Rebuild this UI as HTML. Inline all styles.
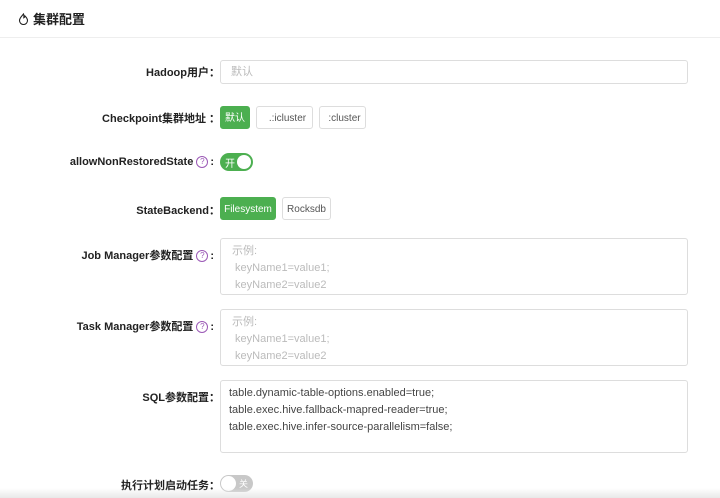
<!DOCTYPE html>
<html><head><meta charset="utf-8"><style>
body{margin:0;width:720px;height:498px;background:#fff;font-family:"Liberation Sans","Noto Sans CJK SC",sans-serif;position:relative;overflow:hidden;color:#333}
.a{position:absolute}
.hd{left:0;top:0;width:720px;height:37px;border-bottom:1px solid #eee}
.lbl{position:absolute;right:500px;font-size:11px;font-weight:bold;color:#222;white-space:nowrap}
.q{display:inline-block;width:10px;height:10px;border:1px solid #9b59b6;border-radius:50%;font-size:8px;line-height:10px;text-align:center;color:#9b59b6;font-weight:normal;vertical-align:1px;margin:0 2px 0 3px}
.box{position:absolute;left:220px;width:468px;border:1px solid #ddd;border-radius:3px;box-sizing:border-box;font-size:11px;color:#bbb;padding:4px 11px;line-height:17px}
.btn{position:absolute;height:23px;border:1px solid #ddd;border-radius:3px;box-sizing:border-box;font-size:10px;line-height:23px;text-align:center;color:#555;background:#fff}
.g{background:#4caf50;border-color:#4caf50;color:#fff}
</style></head><body>
<div class="a hd"></div>
<div class="a" style="left:18px;top:9px;font-size:13px;font-weight:bold;color:#222"><svg width="11" height="12" viewBox="0 0 11 12" style="vertical-align:-1px;margin-right:4px"><path d="M5.5 1 C4 3 1.5 5 1.5 7.5 A4 4 0 0 0 9.5 7.5 C9.5 5.5 8 4 7 3 C6.8 4 6.3 4.6 5.8 4.8 C6 3.5 5.9 2 5.5 1Z" fill="none" stroke="#222" stroke-width="1.1"/></svg>集群配置</div>

<div class="lbl" style="top:64px">Hadoop用户：</div>
<div class="box" style="top:60px;height:24px;padding-left:10px;line-height:14px">默认</div>

<div class="lbl" style="top:110px">Checkpoint集群地址 ：</div>
<div class="btn g" style="left:220px;top:106px;width:30px">默认</div>
<div class="btn" style="left:256px;top:106px;width:57px;padding-left:6px">.:icluster</div>
<div class="btn" style="left:319px;top:106px;width:47px;padding-left:4px">:cluster</div>

<div class="lbl" style="top:156px;right:506px">allowNonRestoredState<span class="q">?</span>:</div>
<div class="a" style="left:220px;top:153px;width:33px;height:18px;border-radius:9px;background:#4caf50"><span class="a" style="left:5px;top:2px;font-size:10px;color:#fff">开</span><span class="a" style="left:17px;top:2px;width:14px;height:14px;border-radius:50%;background:#fff"></span></div>

<div class="lbl" style="top:202px">StateBackend：</div>
<div class="btn g" style="left:220px;top:197px;width:56px">Filesystem</div>
<div class="btn" style="left:282px;top:197px;width:49px">Rocksdb</div>

<div class="lbl" style="top:247px;right:506px">Job Manager参数配置<span class="q">?</span>:</div>
<div class="box" style="top:238px;height:57px">示例:<br>&nbsp;keyName1=value1;<br>&nbsp;keyName2=value2</div>

<div class="lbl" style="top:318px;right:506px">Task Manager参数配置<span class="q">?</span>:</div>
<div class="box" style="top:309px;height:57px">示例:<br>&nbsp;keyName1=value1;<br>&nbsp;keyName2=value2</div>

<div class="lbl" style="top:389px">SQL参数配置：</div>
<div class="box" style="top:380px;height:73px;color:#444;padding-left:8px">table.dynamic-table-options.enabled=true;<br>table.exec.hive.fallback-mapred-reader=true;<br>table.exec.hive.infer-source-parallelism=false;</div>

<div class="lbl" style="top:477px">执行计划启动任务：</div>
<div class="a" style="left:220px;top:475px;width:33px;height:17px;border-radius:9px;background:#c8c8c8"><span class="a" style="left:1px;top:1px;width:15px;height:15px;border-radius:50%;background:#fff"></span><span class="a" style="left:19px;top:2px;font-size:9px;color:#fff">关</span></div>
<div class="a" style="left:0;top:488px;width:720px;height:10px;background:linear-gradient(#fff0,#e8e8e8)"></div>
</body></html>
